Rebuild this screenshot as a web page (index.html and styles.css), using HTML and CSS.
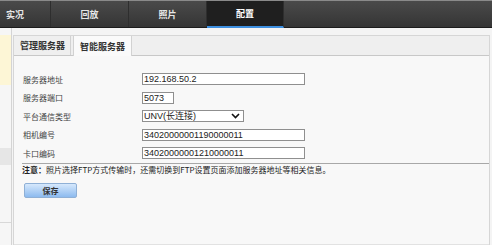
FILE: index.html
```html
<!DOCTYPE html>
<html lang="zh-CN">
<head>
    <meta charset="UTF-8">
    <meta name="viewport" content="width=device-width, initial-scale=1.0">
    <title>配置</title>
    <link rel="stylesheet" href="styles.css">
</head>
<body>
    <div class="topnav">
        <div class="navItem first">实况</div>
        <div class="navItem">回放</div>
        <div class="navItem">照片</div>
        <div class="navItem active">配置</div>
    </div>

    <div class="page">
        <div class="sidebar">
            <div class="sideHi"></div>
            <div class="sideSel"></div>
            <div class="sideRest"></div>
        </div>

        <div class="main">
            <div class="tabs">
                <div class="tab">管理服务器</div>
                <div class="tab active">智能服务器</div>
            </div>

            <div class="content">
                <div class="row">
                    <label>服务器地址</label>
                    <div class="field wide">192.168.50.2</div>
                </div>
                <div class="row">
                    <label>服务器端口</label>
                    <div class="field short">5073</div>
                </div>
                <div class="row">
                    <label>平台通信类型</label>
                    <div class="field select">
                        <span>UNV(长连接)</span>
                        <svg width="9" height="6" viewBox="0 0 9 6"><path d="M1 1 L4.5 4.5 L8 1" fill="none" stroke="#111" stroke-width="1.6"/></svg>
                    </div>
                </div>
                <div class="row">
                    <label>相机编号</label>
                    <div class="field wide">34020000001190000011</div>
                </div>
                <div class="row">
                    <label>卡口编码</label>
                    <div class="field wide">34020000001210000011</div>
                </div>

                <div class="note"><b>注意：</b>照片选择FTP方式传输时，还需切换到FTP设置页面添加服务器地址等相关信息。</div>
                <button class="saveBtn">保存</button>
            </div>
        </div>
    </div>
</body>
</html>
```

FILE: styles.css
```css
* {
    box-sizing: border-box;
}

body {
    margin: 0;
    width: 492px;
    height: 245px;
    overflow: hidden;
    background-color: #f4f4f4;
    font-family: "Noto Sans CJK SC", "Liberation Sans", sans-serif;
    color: #333;
}

.topnav {
    display: flex;
    height: 28px;
    background: linear-gradient(#4a4a4a, #353535);
    border-top: 1px solid #8a8a8a;
    border-bottom: 1px solid #1c1c1c;
}

.navItem {
    width: 78px;
    font-size: 9px;
    font-weight: bold;
    color: #e6e6e6;
    display: flex;
    align-items: center;
    justify-content: center;
    border-right: 1px solid #2e2e2e;
}

.navItem.first {
    width: 51px;
    justify-content: flex-end;
    padding-right: 26px;
}

.navItem.active {
    background-color: #1f1f1f;
    color: #fff;
    border-bottom: 2px solid #3d8fe0;
    margin-bottom: -1px;
    width: 77px;
}

.page {
    display: flex;
    height: 217px;
}

.sidebar {
    width: 12px;
    display: flex;
    flex-direction: column;
    padding-top: 7px;
    border-right: 1px solid #d4d4d4;
    background-color: #f6f6f6;
}

.sideHi {
    height: 50px;
    background-color: #fdf6d6;
}

.sideSel {
    height: 17px;
    margin-top: 63px;
    background-color: #e6e6e6;
}

.sideRest {
    height: 40px;
    margin-top: 18px;
    border-bottom: 1px solid #d8d8d8;
}

.main {
    flex: 1;
    margin-left: 1px;
    margin-right: 2px;
    margin-top: 7px;
    display: flex;
    flex-direction: column;
    border-left: 1px solid #d6d6d6;
    border-right: 1px solid #d6d6d6;
}

.tabs {
    display: flex;
    height: 21px;
    background-color: #efefef;
    border-top: 1px solid #d6d6d6;
    border-bottom: 1px solid #c8c8c8;
    padding-left: 1px;
}

.tab {
    font-size: 9px;
    font-weight: bold;
    color: #333;
    padding: 0 5px;
    display: flex;
    align-items: center;
    border-right: 1px solid #d2d2d2;
}

.tab.active {
    background-color: #fafafa;
    margin-bottom: -1px;
    border-left: 1px solid #d2d2d2;
    margin-left: 2px;
    padding: 0 6px;
}

.content {
    flex: 1;
    background-color: #f8f8f8;
    padding: 14px 0 0 8px;
    border-bottom: 1px solid #e2e2e2;
}

.row {
    display: flex;
    align-items: center;
    height: 18.5px;
}

.row label {
    width: 120px;
    padding-left: 1px;
    font-size: 8px;
    color: #444;
}

.field {
    height: 12px;
    background-color: #fff;
    border: 1px solid #8f8f8f;
    font-family: "Liberation Sans", Arial, sans-serif;
    font-size: 9px;
    line-height: 10px;
    color: #222;
    padding-left: 1px;
    white-space: nowrap;
}

.field.wide {
    width: 163px;
}

.field.short {
    width: 32px;
}

.field.select {
    width: 102px;
    display: flex;
    align-items: center;
    justify-content: space-between;
    padding-right: 3px;
    font-family: "Liberation Sans", "Noto Sans CJK SC", sans-serif;
}

.note {
    margin-top: 0;
    padding-top: 1px;
    height: 12px;
    border-top: 1px solid #a8a8a8;
    font-size: 8px;
    line-height: 10px;
    color: #222;
    white-space: nowrap;
}

.note b {
    font-weight: bold;
}

.saveBtn {
    margin: 0 0 0 2px;
    width: 53px;
    height: 15px;
    padding: 0;
    font-family: "Noto Sans CJK SC", sans-serif;
    font-size: 8px;
    font-weight: bold;
    color: #333;
    border: 1px solid #8fb0d6;
    border-radius: 2px;
    background: linear-gradient(#d6e8fc, #8dbbef);
    cursor: pointer;
}
```
